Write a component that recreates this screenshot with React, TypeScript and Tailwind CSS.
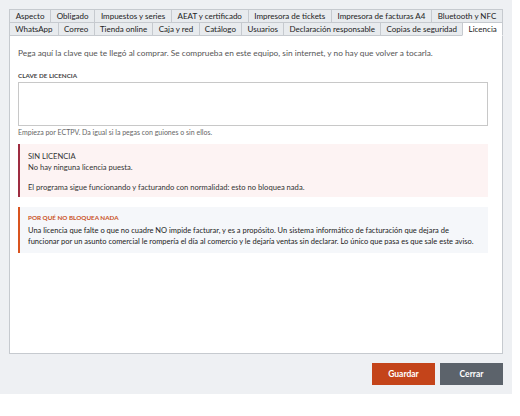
const row1 = [
  "Aspecto",
  "Obligado",
  "Impuestos y series",
  "AEAT y certificado",
  "Impresora de tickets",
  "Impresora de facturas A4",
  "Bluetooth y NFC",
];

const row2 = [
  "WhatsApp",
  "Correo",
  "Tienda online",
  "Caja y red",
  "Catálogo",
  "Usuarios",
  "Declaración responsable",
  "Copias de seguridad",
  "Licencia",
];

const Tab = ({ label, active }: { label: string; active?: boolean }) => (
  <div
    className={`flex-grow h-[14px] flex items-center justify-center px-[4px] border border-[#c6cacf] -ml-px first:ml-0 whitespace-nowrap text-[8px] leading-none ${
      active ? "bg-white border-b-white relative z-10" : "bg-[#e8ebee] text-[#222]"
    }`}
  >
    {label}
  </div>
);

export default function App() {
  return (
    <div className="w-[512px] h-[394px] bg-[#eef0f3] px-[9px] pt-[9px] flex flex-col text-[#222]" style={{ fontFamily: "Lato, 'Noto Sans', sans-serif" }}>
      <div className="flex">
        {row1.map(t => <Tab key={t} label={t} />)}
      </div>
      <div className="flex -mt-px">
        {row2.map(t => <Tab key={t} label={t} active={t === "Licencia"} />)}
      </div>

      <div className="-mt-px h-[319px] bg-white border border-[#c6cacf] pl-2 pr-[14px] pt-[11px]">
        <p className="text-[8.3px] leading-[12px] text-[#555]">
          Pega aquí la clave que te llegó al comprar. Se comprueba en este equipo, sin internet, y no hay que volver a tocarla.
        </p>

        <div className="mt-[13px] text-[6.3px] leading-[8px] font-bold text-[#444] uppercase">Clave de licencia</div>
        <div className="mt-[2px] h-[44px] border border-[#c8c8c8] bg-white" />
        <p className="mt-[1px] text-[7px] leading-[10px] text-[#666]">
          Empieza por ECTPV. Da igual si la pegas con guiones o sin ellos.
        </p>

        <div className="mt-[7px] h-[53px] bg-[#fdf3f3] border-l-2 border-[#9e2d41] pl-[8px] pr-[8px] pt-[7px] text-[7.6px] leading-[11px] text-[#333]">
          <div>SIN LICENCIA</div>
          <div>No hay ninguna licencia puesta.</div>
          <div className="mt-[9px]">El programa sigue funcionando y facturando con normalidad: esto no bloquea nada.</div>
        </div>

        <div className="mt-[10px] h-[46px] bg-[#f5f7fa] border-l-2 border-[#d9541f] pl-[8px] pr-[8px] pt-[6px] text-[7.5px] leading-[11px] text-[#222]">
          <div className="text-[6.3px] leading-[9px] font-bold uppercase text-[#c9501d] mb-[3px]">Por qué no bloquea nada</div>
          <div>
            Una licencia que falte o que no cuadre NO impide facturar, y es a propósito. Un sistema informático de facturación que dejara de funcionar por un asunto comercial le rompería el día al comercio y le dejaría ventas sin declarar. Lo único que pasa es que sale este aviso.
          </div>
        </div>
      </div>

      <div className="flex justify-end gap-[5px] mt-[9px]">
        <button className="w-[63px] h-[22px] bg-[#c4441a] text-white text-[8.5px] font-bold">Guardar</button>
        <button className="w-[63px] h-[22px] bg-[#5c636b] text-white text-[8.5px] font-bold">Cerrar</button>
      </div>
    </div>
  );
}
